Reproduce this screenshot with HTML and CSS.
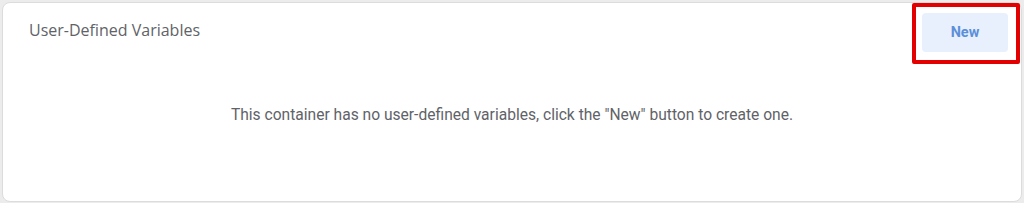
FILE: index.html
```html
<!DOCTYPE html>
<html>
<head>
<meta charset="utf-8">
<link rel="stylesheet" href="styles.css">
</head>
<body>
<div class="card">
  <div class="card-header">
    <div class="title">User-Defined Variables</div>
    <div class="highlight">
      <button class="btn-new">New</button>
    </div>
  </div>
  <div class="empty">This container has no user-defined variables, click the "New" button to create one.</div>
</div>
</body>
</html>
```
FILE: styles.css
```css
html, body {
  margin: 0;
  padding: 0;
  background: #ececec;
}
body {
  padding: 2px 2px 1px 2px;
  height: 203px;
  box-sizing: border-box;
}
.card {
  background: #fff;
  border: 1px solid #dcdcdc;
  border-radius: 8px;
  height: 100%;
  box-sizing: border-box;
  display: flex;
  flex-direction: column;
}
.card-header {
  display: flex;
  justify-content: space-between;
  align-items: flex-start;
  padding: 0 1px 0 26px;
}
.title {
  font-family: "Open Sans", sans-serif;
  font-size: 16px;
  color: #5f6368;
  margin-top: 16px;
}
.highlight {
  margin-top: 0;
  border: 4px solid #e30000;
  border-radius: 2px;
  padding: 6px 8px 8px 6px;
  width: 86px;
}
.btn-new {
  display: block;
  width: 86px;
  height: 39px;
  border: none;
  border-radius: 4px;
  background: #e8f0fe;
  color: #5b8fd9;
  font-family: "Roboto", sans-serif;
  font-weight: bold;
  font-size: 14.5px;
  padding: 0;
}
.empty {
  font-family: "Roboto", sans-serif;
  font-size: 15.6px;
  color: #5f6368;
  text-align: center;
  margin-top: 42px;
}
```
